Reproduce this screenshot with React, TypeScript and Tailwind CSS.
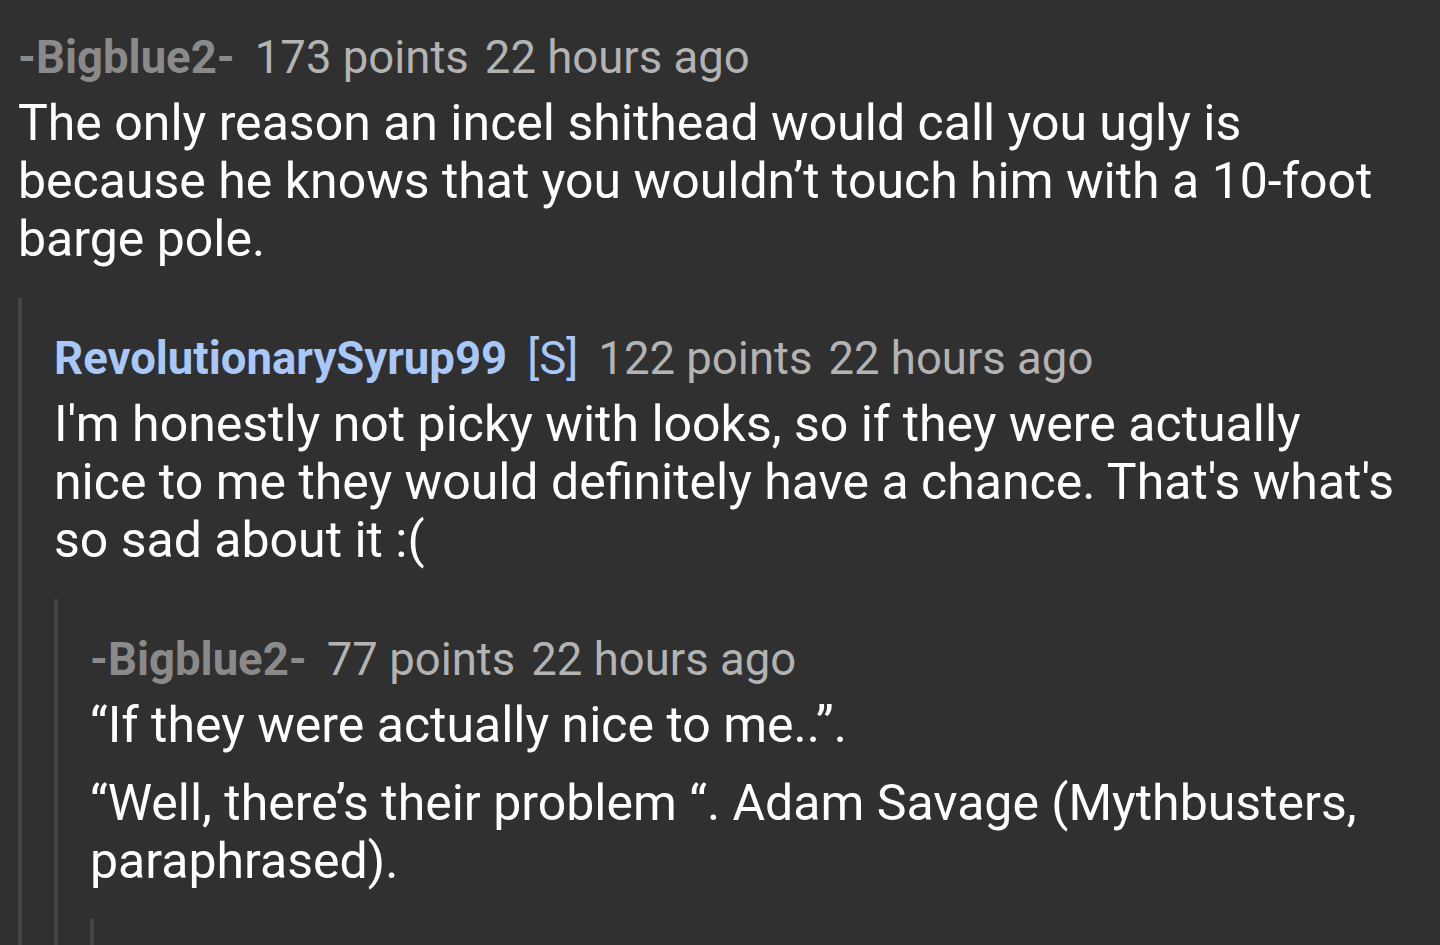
const Header = ({ user, points, blue }: { user: string; points: number; blue?: boolean }) => (
  <div className="mb-[6px] flex h-[60px] items-baseline whitespace-nowrap text-[45.5px] leading-[60px] text-[#b3b3b3]">
    <span className={blue ? 'font-bold text-[#a8c7fa]' : 'font-bold text-[#8a8a8a]'}>{user}</span>
    {blue && <span className="ml-[20px] text-[#a8c7fa]">[S]</span>}
    <span className="ml-[20px]">{points} points</span>
    <span className="ml-[16px]">22 hours ago</span>
  </div>
)

const Body = ({ children }: { children: React.ReactNode }) => (
  <p className="whitespace-nowrap text-[50px] leading-[58px] text-white">{children}</p>
)

export default function App() {
  return (
    <div
      className="h-[945px] w-[1440px] overflow-hidden bg-[#303030] pl-[18px] pt-[28px]"
      style={{ fontFamily: 'Roboto, "Noto Sans", sans-serif' }}
    >
      <Header user="-Bigblue2-" points={173} />
      <Body>
        The only reason an incel shithead would call you ugly is
        <br />
        because he knows that you wouldn’t touch him with a 10-foot
        <br />
        barge pole.
      </Body>

      <div className="mt-[30px] border-l-4 border-[#444444] pl-8 pt-[31px]">
        <Header user="RevolutionarySyrup99" points={122} blue />
        <Body>
          I'm honestly not picky with looks, so if they were actually
          <br />
          nice to me they would definitely have a chance. That's what's
          <br />
          so sad about it :(
        </Body>

        <div className="mt-[30px] border-l-4 border-[#444444] pl-8 pt-[31px]">
          <Header user="-Bigblue2-" points={77} />
          <div className="flex flex-col gap-5">
            <Body>“If they were actually nice to me..”.</Body>
            <Body>
              “Well, there’s their problem “. Adam Savage (Mythbusters,
              <br />
              paraphrased).
            </Body>
          </div>

          <div className="mt-[29px] h-[200px] border-l-4 border-[#444444]" />
        </div>
      </div>
    </div>
  )
}
